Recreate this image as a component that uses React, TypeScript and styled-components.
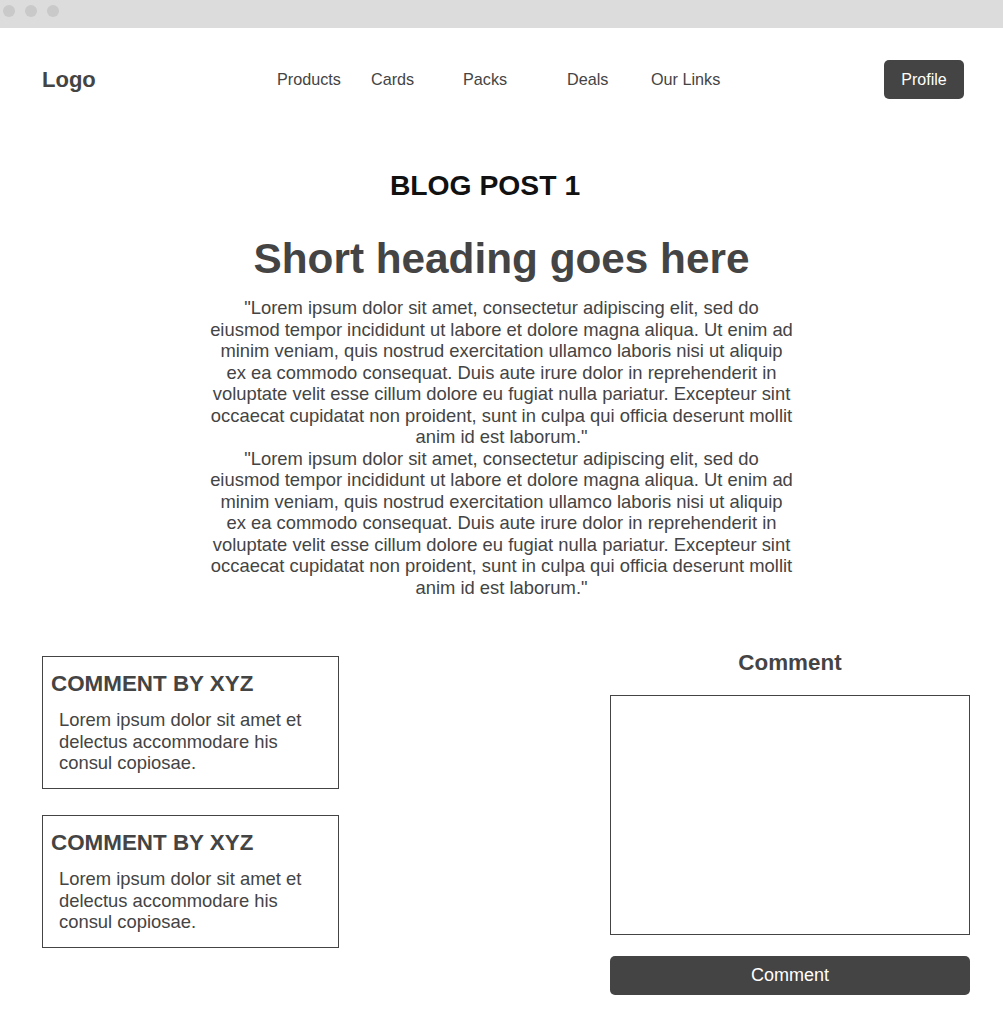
import styled, { createGlobalStyle } from 'styled-components';

const GlobalStyle = createGlobalStyle`
  html, body {
    margin: 0;
    padding: 0;
    background: #ffffff;
  }
  body {
    font-family: 'Liberation Sans', Arial, sans-serif;
    color: #444444;
  }
  * {
    box-sizing: border-box;
  }
`;

const NAV_LINKS = [
  { label: 'Products', width: 94 },
  { label: 'Cards', width: 92 },
  { label: 'Packs', width: 104 },
  { label: 'Deals', width: 84 },
  { label: 'Our Links', width: 80 },
];

const LOREM =
  '"Lorem ipsum dolor sit amet, consectetur adipiscing elit, sed do eiusmod tempor incididunt ut labore et dolore magna aliqua. Ut enim ad minim veniam, quis nostrud exercitation ullamco laboris nisi ut aliquip ex ea commodo consequat. Duis aute irure dolor in reprehenderit in voluptate velit esse cillum dolore eu fugiat nulla pariatur. Excepteur sint occaecat cupidatat non proident, sunt in culpa qui officia deserunt mollit anim id est laborum."';

const COMMENTS = [
  { id: 1, author: 'XYZ', text: 'Lorem ipsum dolor sit amet et delectus accommodare his consul copiosae.' },
  { id: 2, author: 'XYZ', text: 'Lorem ipsum dolor sit amet et delectus accommodare his consul copiosae.' },
];

const App = () => {
  return (
    <>
      <GlobalStyle />
      <Window>
        <TitleBar>
          <Dot />
          <Dot />
          <Dot />
        </TitleBar>

        <Header>
          <Logo>Logo</Logo>
          <Nav>
            {NAV_LINKS.map((link) => (
              <NavLink key={link.label} $width={link.width}>
                {link.label}
              </NavLink>
            ))}
          </Nav>
          <ProfileButton>Profile</ProfileButton>
        </Header>

        <Post>
          <PostLabel>BLOG POST 1</PostLabel>
          <Heading>Short heading goes here</Heading>
          <Body>
            <p>{LOREM}</p>
            <p>{LOREM}</p>
          </Body>
        </Post>

        <Discussion>
          <CommentList>
            {COMMENTS.map((c) => (
              <CommentCard key={c.id}>
                <CommentAuthor>COMMENT BY {c.author}</CommentAuthor>
                <CommentText>{c.text}</CommentText>
              </CommentCard>
            ))}
          </CommentList>

          <CommentForm>
            <FormTitle>Comment</FormTitle>
            <CommentBox />
            <SubmitButton>Comment</SubmitButton>
          </CommentForm>
        </Discussion>
      </Window>
    </>
  );
};

export default App;

const Window = styled.div`
  width: 1003px;
  min-height: 1016px;
  background: #fff;
`;

const TitleBar = styled.div`
  height: 28px;
  background: #dcdcdc;
  display: flex;
  align-items: center;
  gap: 10px;
  padding: 0 0 6px 3px;
`;

const Dot = styled.span`
  width: 12px;
  height: 12px;
  border-radius: 50%;
  background: #c9c9c9;
`;

const Header = styled.header`
  display: flex;
  align-items: center;
  height: 39px;
  margin-top: 32px;
  padding: 0 39px 0 42px;
`;

const Logo = styled.div`
  font-size: 22px;
  font-weight: 700;
  color: #444;
  width: 235px;
`;

const Nav = styled.nav`
  display: flex;
  flex: 1;
`;

const NavLink = styled.a<{ $width: number }>`
  width: ${(p) => p.$width}px;
  font-size: 16.2px;
  color: #444;
  text-decoration: none;
  cursor: pointer;
`;

const ProfileButton = styled.button`
  width: 80px;
  height: 39px;
  border: none;
  border-radius: 5px;
  background: #444;
  color: #fff;
  font-family: inherit;
  font-size: 16px;
  cursor: pointer;
`;

const Post = styled.section`
  display: flex;
  flex-direction: column;
  align-items: center;
  margin-top: 70px;
`;

const PostLabel = styled.h2`
  margin: 0 33px 0 0;
  font-size: 28.3px;
  font-weight: 700;
  color: #111;
  line-height: 32px;
`;

const Heading = styled.h1`
  margin: 34px 0 0 0;
  font-size: 42.3px;
  font-weight: 700;
  color: #444;
  line-height: 48px;
`;

const Body = styled.div`
  width: 585px;
  margin-top: 14px;
  text-align: center;
  font-size: 18.4px;
  line-height: 21.5px;
  color: #444;

  p {
    margin: 0;
  }
`;

const Discussion = styled.section`
  display: flex;
  justify-content: space-between;
  align-items: flex-start;
  padding: 0 33px 0 42px;
  margin-top: 48px;
`;

const CommentList = styled.div`
  display: flex;
  flex-direction: column;
  gap: 26px;
  margin-top: 10px;
`;

const CommentCard = styled.article`
  width: 297px;
  height: 133px;
  border: 1px solid #444;
  padding: 13px 8px 0 8px;
`;

const CommentAuthor = styled.h3`
  margin: 0;
  font-size: 22.4px;
  font-weight: 700;
  color: #444;
  line-height: 28px;
`;

const CommentText = styled.p`
  margin: 11px 0 0 8px;
  font-size: 18.4px;
  line-height: 21.5px;
  color: #444;
`;

const CommentForm = styled.div`
  width: 360px;
  margin-top: 3px;
  display: flex;
  flex-direction: column;
  align-items: center;
`;

const FormTitle = styled.h3`
  margin: 0;
  font-size: 22.4px;
  font-weight: 700;
  color: #444;
  line-height: 28px;
`;

const CommentBox = styled.textarea`
  width: 360px;
  height: 240px;
  margin-top: 18px;
  border: 1px solid #444;
  border-radius: 0;
  resize: none;
  font-family: inherit;
  font-size: 16px;
`;

const SubmitButton = styled.button`
  width: 360px;
  height: 39px;
  margin-top: 21px;
  border: none;
  border-radius: 5px;
  background: #444;
  color: #fff;
  font-family: inherit;
  font-size: 18px;
  cursor: pointer;
`;
